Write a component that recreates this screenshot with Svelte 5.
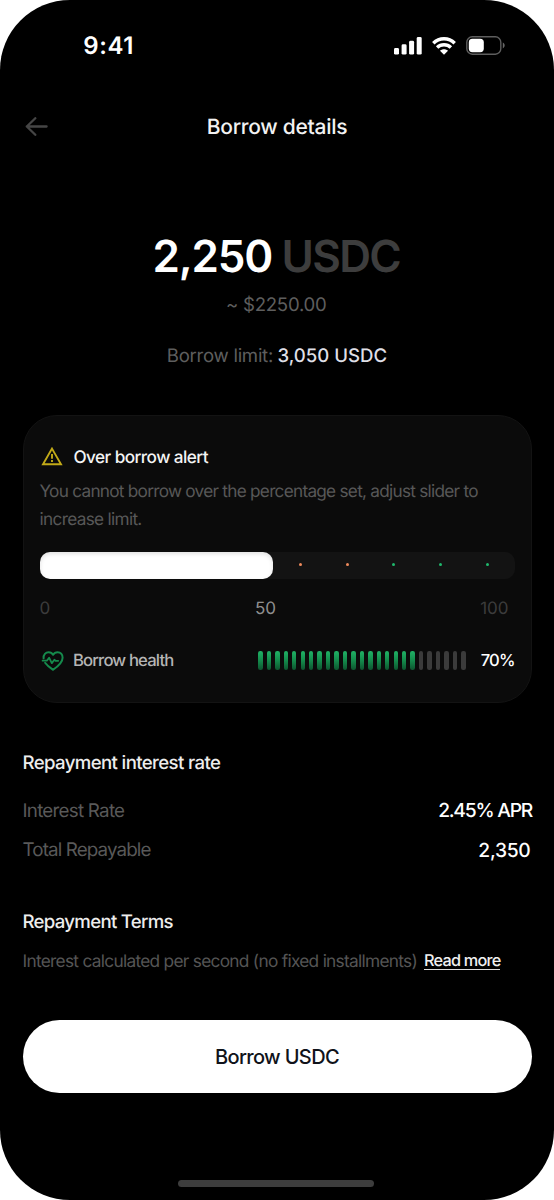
<script>
  const dots = ['orange', 'orange', 'green', 'green', 'green'];
  const bars = Array.from({ length: 25 }, (_, i) => i < 19);
  const level = 49.2;
</script>

<main class="phone">
  <header class="status">
    <span class="time">9:41</span>
    <span class="system">
      <svg width="29" height="18" viewBox="0 0 29 18" fill="#fff">
        <rect x="0" y="11" width="5" height="6.6" rx="1.4" />
        <rect x="7.6" y="7.3" width="5" height="10.3" rx="1.4" />
        <rect x="15.1" y="3.8" width="5" height="13.8" rx="1.4" />
        <rect x="22.7" y="0" width="5" height="17.6" rx="1.4" />
      </svg>
      <svg class="wifi" width="24" height="18" viewBox="0 0 24 18">
        <g fill="none" stroke="#fff" stroke-width="3.5">
          <path d="M1.3 6.2C7.3.4 16.7.4 22.7 6.2" />
          <path d="M5.1 10.5C9 6.9 15 6.9 18.9 10.5" />
        </g>
        <path d="M8 13.7C10.3 11.7 13.7 11.7 16 13.7L12 17.8Z" fill="#fff" />
      </svg>
      <svg class="battery" width="40" height="20" viewBox="0 0 40 20">
        <rect x=".8" y=".8" width="34" height="17.4" rx="5.4" fill="none" stroke="#5e5e5e" stroke-width="1.4" />
        <rect x="2.8" y="2.8" width="15" height="13.4" rx="3.6" fill="#fff" />
        <path d="M36.8 6.6C39.3 7.6 39.3 11.4 36.8 12.4Z" fill="#666" />
      </svg>
    </span>
  </header>

  <nav>
    <svg width="23" height="19" viewBox="0 0 23 19" fill="none" stroke="#454545" stroke-width="2.3" stroke-linecap="round" stroke-linejoin="round">
      <path d="M21.6 9.5H1.8M10.3 1.2L1.8 9.5L10.3 17.8" />
    </svg>
    <h1>Borrow details</h1>
  </nav>

  <section class="amount">
    <p class="value"><span>2,250</span><span class="unit">USDC</span></p>
    <p class="fiat">~ $2250.00</p>
    <p class="limit"><span>Borrow limit:</span><strong>3,050 USDC</strong></p>
  </section>

  <section class="card">
    <div class="title">
      <svg width="22" height="20" viewBox="0 0 22 20" fill="none" stroke="#c2aa18" stroke-width="1.9">
        <path d="M11 1.6L20 17.3H2Z" />
        <path d="M11 6.9V11.7M11 13V15" />
      </svg>
      <h2>Over borrow alert</h2>
    </div>
    <p class="note">You cannot borrow over the percentage set, adjust slider to<br /><span>increase limit.</span></p>
    <div class="slider">
      <div class="fill" style="width: {level}%"></div>
      <div class="dots">
        {#each dots as dot}<i class={dot}></i>{/each}
      </div>
    </div>
    <div class="scale"><span>0</span><span class="current">50</span><span>100</span></div>
    <div class="health">
      <svg width="24" height="22" viewBox="0 0 24 22" fill="none" stroke="#158a4c" stroke-width="2" stroke-linecap="round" stroke-linejoin="round">
        <path d="M2.6 8.3C2.2 4.5 4.8 2.2 7.6 2.2C9.6 2.2 11.2 3.2 12.1 4.8C13 3.2 14.6 2.2 16.6 2.2C19.6 2.2 21.6 4.6 21.6 7.7C21.6 13 15.2 17.6 12.1 19.8C9.8 18.3 6.2 15.8 4.1 12.8" />
        <path d="M1.6 10.7H5.8L8.1 7.7L10.8 13.1L13.4 9.7L14.6 10.8H17.2" stroke-width="1.8" />
      </svg>
      <span class="label">Borrow health</span>
      <div class="meter">
        {#each bars as on}<i class:on></i>{/each}
      </div>
      <span class="percent">70%</span>
    </div>
  </section>

  <section class="rate">
    <h3>Repayment interest rate</h3>
    <dl>
      <div><dt>Interest Rate</dt><dd class="apr">2.45% APR</dd></div>
      <div><dt class="total">Total Repayable</dt><dd>2,350</dd></div>
    </dl>
  </section>

  <section class="terms">
    <h3>Repayment Terms</h3>
    <p><span>Interest calculated per second (no fixed installments)</span><a href="#terms">Read more</a></p>
  </section>

  <button>Borrow USDC</button>
  <div class="home"></div>
</main>

<style>
  :global(body) { background: #fff; }
  .phone {
    box-sizing: border-box;
    width: 554px;
    height: 1200px;
    padding: 0 22.5px;
    display: flex;
    flex-direction: column;
    overflow: hidden;
    background: #000;
    color: #fff;
    border-radius: 70px;
    font-family: Inter, sans-serif;
    text-rendering: geometricPrecision;
    white-space: nowrap;
  }
  h1, h2, h3, p, dl, dd { margin: 0; font-weight: 500; }
  svg { display: block; flex: none; }

  .status { height: 91px; display: flex; align-items: center; justify-content: space-between; padding: 0 26px 0 60.8px; }
  .time { font-size: 24px; font-weight: 600; letter-spacing: .6px; }
  .system { display: flex; align-items: center; }
  .wifi { margin-left: 9px; }
  .battery { margin-left: 10px; }

  nav { height: 72px; display: grid; grid-template-columns: 23px 1fr 23px; align-items: center; padding: 0 2.5px; }
  nav svg { margin-top: -1px; }
  h1 { padding-top: 1.5px; text-align: center; font-size: 21px; letter-spacing: -.28px; color: #f2f2f2; }

  .amount { display: flex; flex-direction: column; align-items: center; padding-top: 63px; }
  .value { display: flex; gap: 9.5px; height: 60px; line-height: 60px; font-size: 44px; font-weight: 600; letter-spacing: -1.2px; margin-right: 1.5px; }
  .value span { font-weight: 600; }
  .value .unit { color: #3d3d3d; letter-spacing: -1.7px; }
  .fiat { height: 36px; line-height: 36px; margin: 1px 1.5px 0 0; font-size: 18.6px; font-weight: 400; color: #5e5e5e; letter-spacing: -.25px; }
  .limit { display: flex; gap: 4.5px; margin-top: 15px; height: 36px; line-height: 36px; font-size: 18.6px; color: #5e5e5e; letter-spacing: -.28px; }
  .limit span { font-weight: 400; }
  .limit strong { font-size: 18.6px; font-weight: 500; letter-spacing: 0; color: #dfdfe6; }

  .card {
    box-sizing: border-box;
    height: 288px;
    margin-top: 40.5px;
    padding: 26.5px 16px 0;
    background: #0b0b0b;
    border: 1px solid #131313;
    border-radius: 34px;
  }
  .title { display: flex; align-items: center; height: 30px; gap: 10.5px; padding-left: 1.5px; }
  .title svg { margin-top: -1px; }
  h2 { font-size: 17.2px; letter-spacing: -.57px; color: #f4f4f4; }
  .note { margin-top: 5.5px; font-size: 17.2px; line-height: 28px; font-weight: 400; letter-spacing: -.73px; color: #585858; }
  .note span { letter-spacing: -.67px; }
  .slider { display: flex; height: 27px; margin-top: 18.5px; background: #131313; border-radius: 10px; }
  .fill { flex: none; background: #fff; border-radius: 10px; box-shadow: inset 0 2px 4px rgba(0, 0, 0, .12); }
  .dots { flex: 1; display: flex; justify-content: space-between; align-items: center; padding: 0 25.5px 2px; }
  .dots i { width: 3px; height: 3px; border-radius: 50%; background: #1fb86c; }
  .dots .orange { background: #ef8a5c; }
  .scale { display: grid; grid-template-columns: 215.5px 20px 1fr; height: 20px; line-height: 20px; margin-top: 20px; padding: 0 6px 0 0; font-size: 17px; color: #3c3c3c; }
  .scale span:last-child { text-align: right; }
  .scale .current { color: #8f8f8f; }
  .health { display: flex; align-items: center; height: 32px; margin-top: 25.5px; padding-left: 1.5px; }
  .label { width: 193.3px; padding-left: 8px; box-sizing: border-box; font-size: 16.7px; font-weight: 500; letter-spacing: -.86px; color: #b5b5b5; }
  .meter { flex: none; display: flex; justify-content: space-between; width: 207.5px; }
  .meter i { width: 4.4px; height: 18.5px; border-radius: 2.2px; background: #3b3b3b; }
  .meter i.on { background: linear-gradient(#20b266, #15904f 45%, #0d552f); }
  .percent { margin-left: 15px; font-size: 16.6px; font-weight: 500; letter-spacing: -.9px; }

  h3 { font-size: 18.6px; letter-spacing: -.62px; line-height: 24px; color: #ededed; }
  .rate { margin-top: 48px; }
  dl { margin-top: 16px; }
  dl div { display: flex; justify-content: space-between; align-items: center; height: 39.5px; }
  dt { font-size: 18.8px; font-weight: 400; letter-spacing: -.75px; color: #595959; }
  dt.total { letter-spacing: -.88px; }
  dd { font-size: 19.3px; letter-spacing: -.3px; margin-right: 1px; }
  dd.apr { letter-spacing: -1.25px; margin-right: -.5px; }
  .terms { margin-top: 40px; }
  .terms h3 { letter-spacing: -.7px; }
  .terms p { display: flex; align-items: center; gap: 7px; height: 28px; margin-top: 14px; }
  .terms p span { font-size: 17.3px; font-weight: 400; letter-spacing: -.71px; color: #555; }
  a { margin-top: -1px; font-size: 16.3px; line-height: 17px; letter-spacing: -.8px; color: #f0f0f0; text-decoration: none; border-bottom: 1px solid #ddd; }
  button {
    flex: none;
    height: 73px;
    margin-top: 44px;
    padding-top: 2px;
    border: 0;
    border-radius: 37px;
    background: #fff;
    color: #10131a;
    font: 500 20px Inter, sans-serif;
    letter-spacing: -.65px;
  }
  .home { align-self: center; width: 196px; height: 7px; margin-top: auto; margin-bottom: 13px; margin-right: 3px; border-radius: 4px; background: #3d3d3d; }
</style>
